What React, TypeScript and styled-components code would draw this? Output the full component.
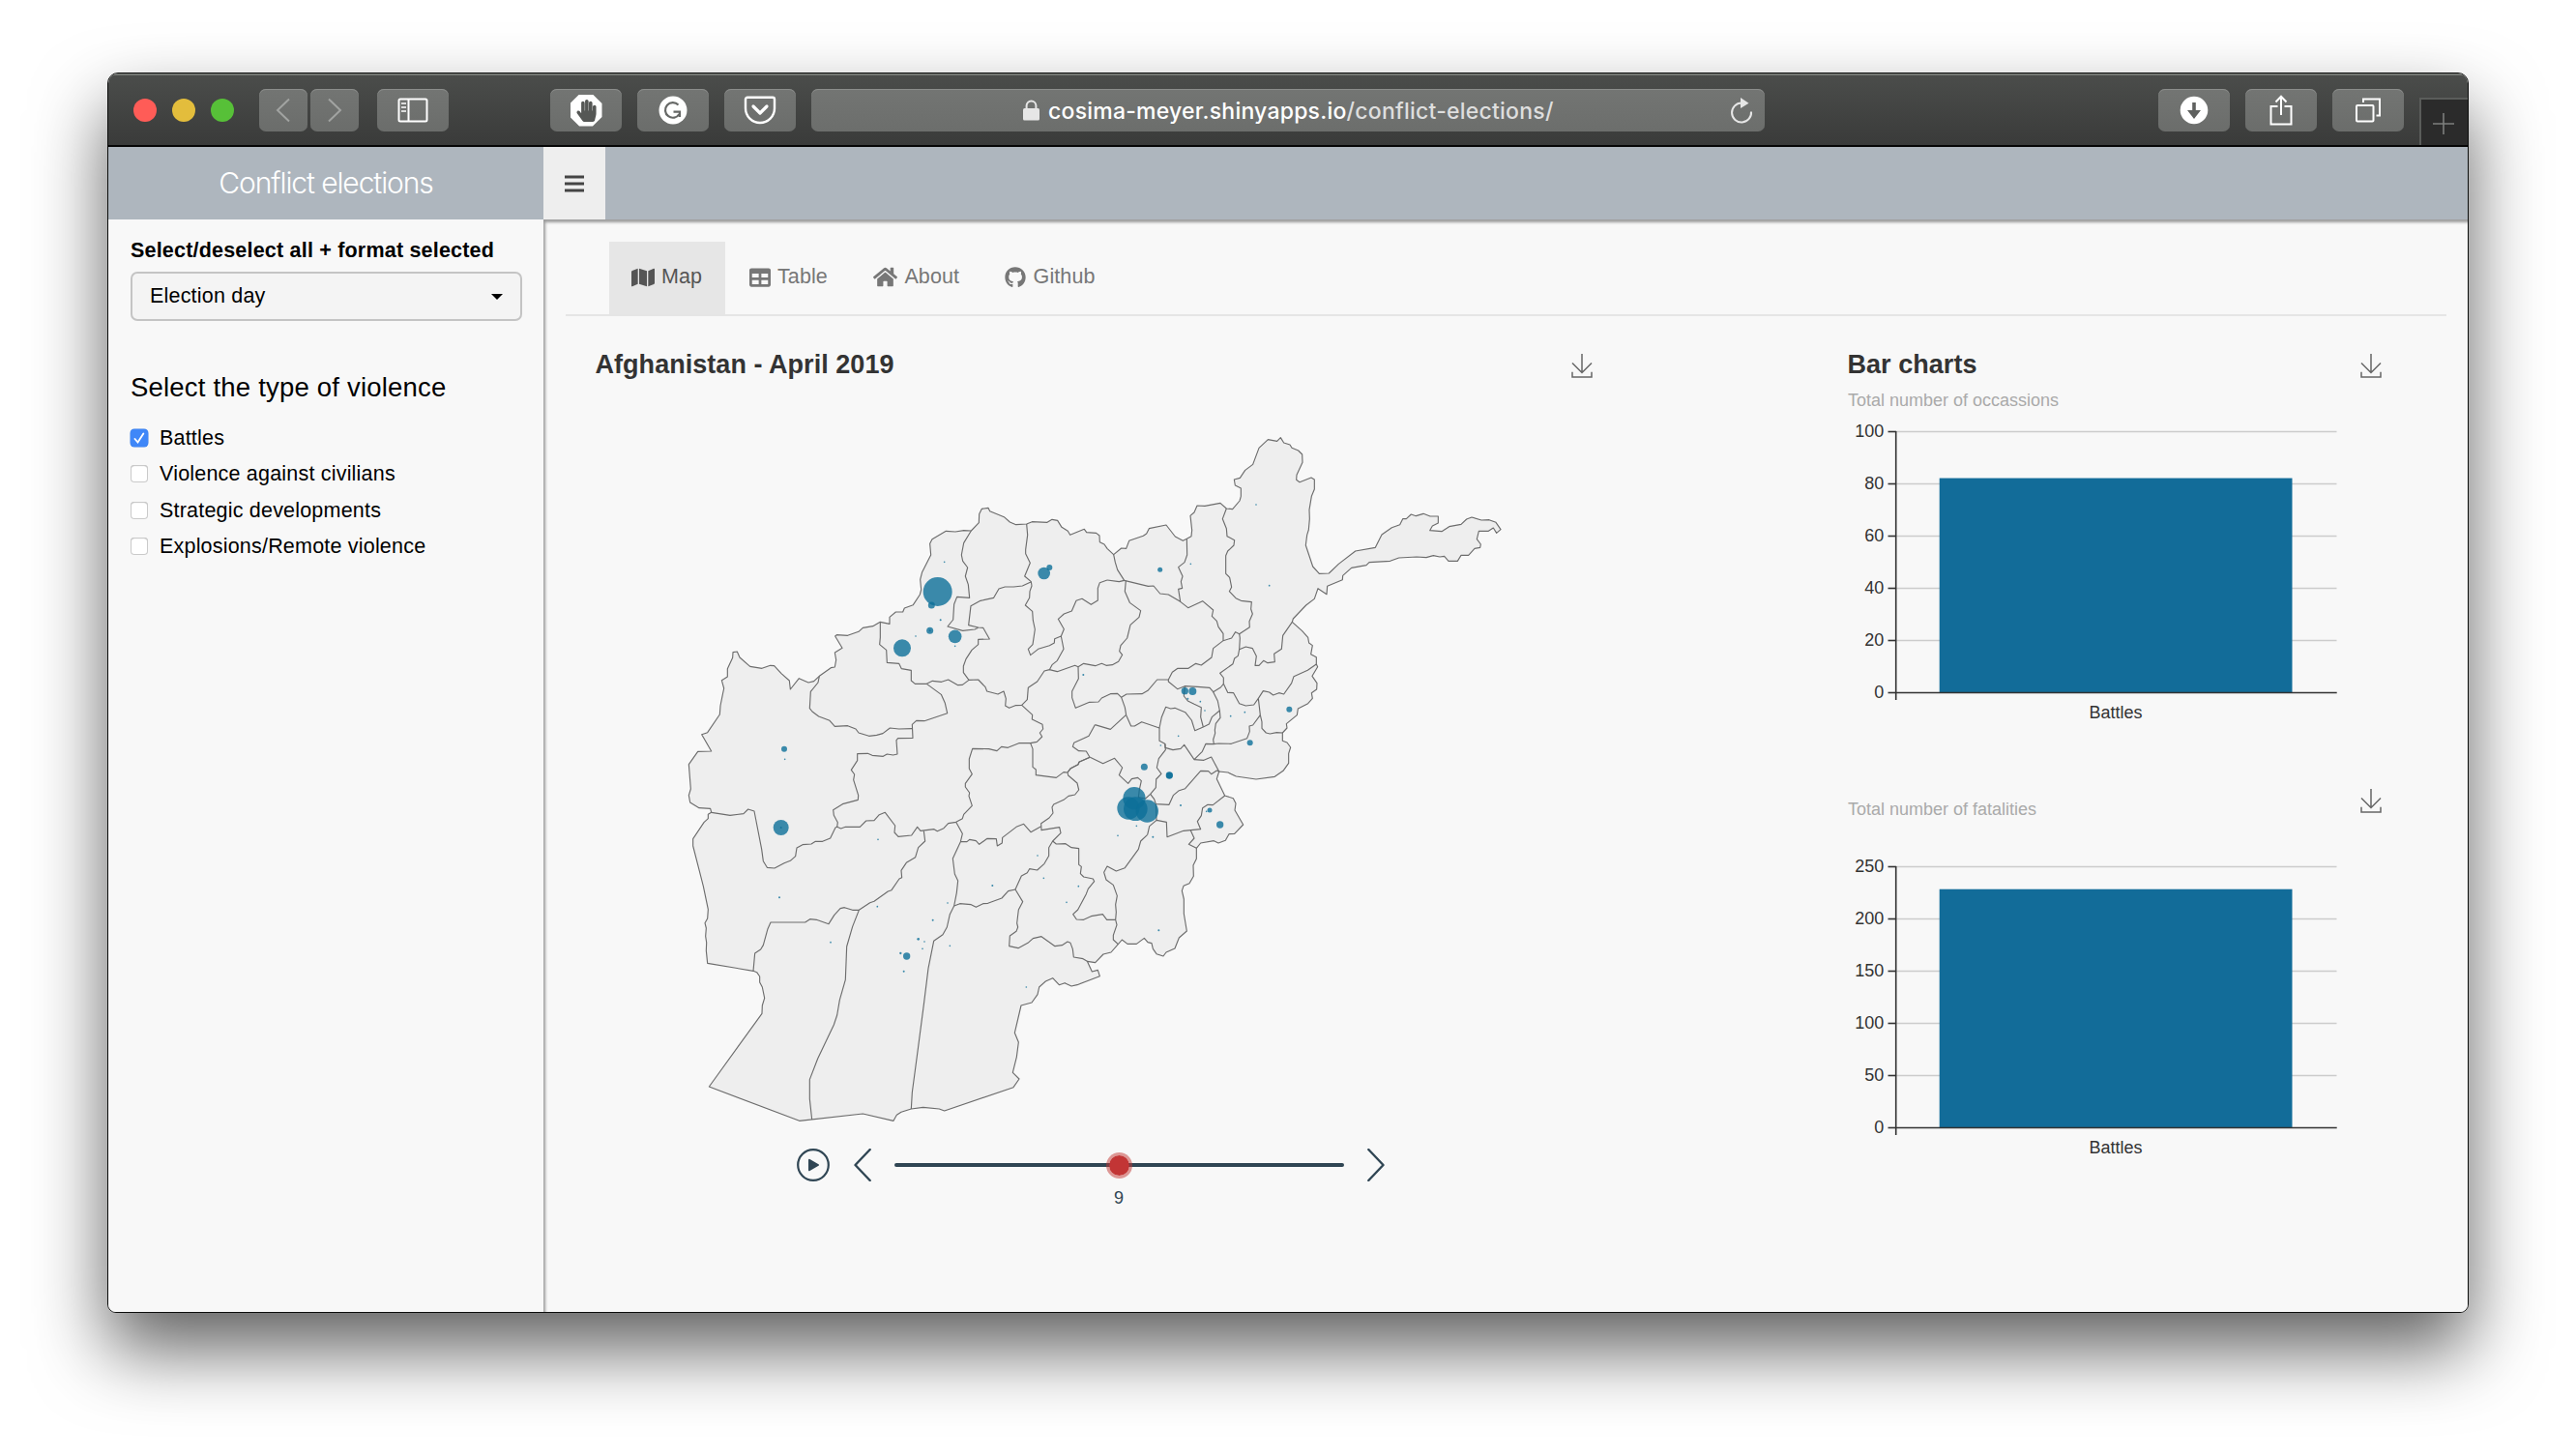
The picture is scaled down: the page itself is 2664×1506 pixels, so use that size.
import React from "react";
import styled, { createGlobalStyle } from "styled-components";
import { FaGithub, FaHandPaper, FaHome, FaMap, FaTable } from "react-icons/fa";

const GlobalStyle = createGlobalStyle`
  *, *::before, *::after { box-sizing: border-box; }
  body {
    margin: 0;
    background: #fff;
    font-family: "Liberation Sans", Arial, Helvetica, sans-serif;
  }
`;

/* ---------- window ---------- */

const Desktop = styled.div`
  width: 2664px;
  height: 1506px;
  padding: 75px 111px 0;
  overflow: hidden;
`;

const BrowserWindow = styled.div`
  width: 2442px;
  height: 1283px;
  border: 1px solid #0c0d0c;
  border-radius: 11px 11px 9px 9px;
  background: #f8f8f8;
  overflow: hidden;
  display: flex;
  flex-direction: column;
  box-shadow: 0 38px 76px rgba(0, 0, 0, 0.62);
`;

const Toolbar = styled.div`
  flex: none;
  height: 76px;
  padding: 2px 0 0 26px;
  display: flex;
  align-items: center;
  background: linear-gradient(#4b4d4b, #3a3b3a);
  border-bottom: 2px solid #060606;
  box-shadow: inset 0 2px 0 #737672;
`;

const Lights = styled.div`
  display: flex;
  gap: 16px;
  width: 130px;
`;

const Light = styled.span<{ $color: string }>`
  width: 24px;
  height: 24px;
  border-radius: 50%;
  background: ${(p) => p.$color};
`;

const ToolButton = styled.button<{ $width: number; $before?: number }>`
  flex: none;
  width: ${(p) => p.$width}px;
  height: 44px;
  margin: 0 0 0 ${(p) => p.$before ?? 16}px;
  padding: 0;
  border: 0;
  border-radius: 7px;
  display: flex;
  align-items: center;
  justify-content: center;
  color: #fff;
  background: linear-gradient(#737573, #6b6d6b);
  box-shadow: inset 0 1px 0 #8b8d8b;
`;

const AddressBar = styled.div`
  flex: none;
  width: 986px;
  height: 44px;
  margin-left: 16px;
  padding: 0 12px 0 219px;
  border-radius: 7px;
  display: flex;
  align-items: center;
  color: #e6e6e6;
  background: linear-gradient(#737573, #6c6e6c);
  box-shadow: inset 0 1px 0 #8b8d8b;
`;

const Url = styled.span`
  margin: 2px auto 0 9px;
  font-family: Inter, sans-serif;
  font-size: 23px;
  font-weight: 500;
  line-height: 30px;
  letter-spacing: 0.23px;
  white-space: nowrap;
  color: #dedede;
`;

const Host = styled.span`
  color: #fff;
`;

const NewTab = styled.div`
  align-self: flex-end;
  width: 50px;
  height: 49px;
  margin-left: 16px;
  padding: 3px 3px 0 0;
  display: flex;
  align-items: center;
  justify-content: center;
  background: #2b2b2b;
  border: solid #5a5c5a;
  border-width: 2px 0 0 2px;
`;

/* ---------- dashboard ---------- */

const Page = styled.div`
  flex: 1;
  display: flex;
  min-height: 0;
`;

const Sidebar = styled.aside`
  flex: none;
  width: 450px;
  background: #f8f8f8;
`;

const Brand = styled.div`
  height: 75px;
  background: #aeb6be;
  color: #fff;
  font-family: Inter, sans-serif;
  font-weight: 300;
  font-size: 30px;
  line-height: 75px;
  letter-spacing: -1.1px;
  text-align: center;
`;

const Filters = styled.div`
  padding: 18px 22px 0 23px;
  color: #000;
  font-size: 21.5px;
  letter-spacing: 0.2px;
`;

const FieldLabel = styled.div`
  font-weight: 700;
  line-height: 29px;
  padding-bottom: 1px;
  white-space: nowrap;
`;

const Select = styled.div`
  height: 51px;
  margin-top: 6px;
  padding: 0 18px;
  display: flex;
  align-items: center;
  justify-content: space-between;
  border: 2px solid #c4c4c4;
  border-radius: 7px;
  background: #f4f4f4;
`;

const Caret = styled.span`
  border: 6px solid transparent;
  border-top-color: #000;
  border-bottom: 0;
`;

const GroupTitle = styled.h2`
  margin: 54px 0 18px;
  font-size: 27.5px;
  font-weight: 400;
  line-height: 30px;
  white-space: nowrap;
`;

const CheckRow = styled.div`
  height: 37.5px;
  display: flex;
  align-items: center;
  gap: 12px;
  line-height: 24px;
  white-space: nowrap;
`;

const Box = styled.span<{ $on: boolean }>`
  width: 18px;
  height: 18px;
  border-radius: 4px;
  display: flex;
  align-items: center;
  justify-content: center;
  background: ${(p) => (p.$on ? "#3f87f8" : "#fff")};
  box-shadow: ${(p) => (p.$on ? "0 0 0 0.5px #3b7fe8" : "inset 0 0 0 1px #cacaca, inset 0 1px 1px #b0b0b0")};
`;

const Main = styled.main`
  flex: 1;
  min-width: 0;
  display: flex;
  flex-direction: column;
`;

const Navbar = styled.header`
  flex: none;
  height: 75px;
  background: #aeb6be;
`;

const MenuButton = styled.button`
  width: 64px;
  height: 75px;
  padding: 0;
  border: 0;
  display: flex;
  align-items: center;
  justify-content: center;
  background: #eee;
`;

const Content = styled.div`
  flex: 1;
  padding: 23px 22px 0 23px;
  background: #f8f8f8;
  box-shadow: inset 2px 3px 3px #9d9d9d;
`;

const TabList = styled.nav`
  display: flex;
  gap: 2px;
  height: 77px;
  padding-left: 45px;
  border-bottom: 2px solid #e5e5e5;
`;

const Tab = styled.div<{ $active?: boolean }>`
  height: 75px;
  min-width: 120px;
  padding: 0 22.5px 2px;
  display: flex;
  align-items: center;
  gap: 7.5px;
  font-size: 21.5px;
  letter-spacing: 0.1px;
  white-space: nowrap;
  color: ${(p) => (p.$active ? "#555" : "#777")};
  background: ${(p) => (p.$active ? "#e6e6e6" : "transparent")};
`;

const Panels = styled.div`
  display: grid;
  grid-template-columns: 1295px 552px;
  padding: 35px 0 0 31px;
`;

const PanelHeader = styled.div<{ $width: number }>`
  width: ${(p) => p.$width}px;
  height: 30px;
  display: flex;
  justify-content: space-between;
  align-items: flex-end;
`;

const PanelTitle = styled.h3`
  margin: 0 0 0 -0.5px;
  font-size: 27px;
  font-weight: 700;
  line-height: 30px;
  letter-spacing: 0.04px;
  white-space: nowrap;
  color: #333;
`;

const Subtitle = styled.div`
  font-size: 18px;
  line-height: 24px;
  white-space: nowrap;
  color: #aaa;
`;

const FirstSubtitle = styled(Subtitle)`
  margin-top: 10px;
`;

const SecondHeader = styled.div`
  height: 33px;
  margin: 56px 0 27px;
  display: flex;
  justify-content: space-between;
  ${Subtitle} { padding-top: 9px; }
`;

const MapSvg = styled.svg`
  display: block;
  margin: 38px 0 0 84px;
`;

const Timeline = styled.div`
  display: flex;
  align-items: center;
  height: 34px;
  margin: 8px 0 0 208px;
`;

const PlayButton = styled.svg`
  margin-right: 25px;
`;

const Track = styled.div`
  position: relative;
  width: 465px;
  height: 4px;
  margin: 0 24px;
  border-radius: 2px;
  background: #304654;
`;

const Handle = styled.span`
  position: absolute;
  left: 50%;
  top: 50%;
  width: 27px;
  height: 27px;
  margin: -13.5px 0 0 -13.5px;
  border-radius: 50%;
  border: 3.5px solid rgba(194, 53, 49, 0.5);
  background: #c23535;
  background-clip: padding-box;
`;

const Tick = styled.span`
  position: absolute;
  left: 50%;
  top: 24px;
  width: 30px;
  margin-left: -15.5px;
  text-align: center;
  font-size: 18px;
  line-height: 24px;
  color: #304654;
`;

const ChartSvg = styled.svg`
  display: block;
  overflow: visible;
  font-family: "Liberation Sans", Arial, sans-serif;
  font-size: 18px;
`;

/* ---------- small drawings ---------- */

const Download = () => (
  <svg width="22" height="26" viewBox="0 0 22 26" fill="none" stroke="#666" strokeWidth="1.5">
    <path d="M11 0V19.5M1 9.5L11 19.5L21 9.5M1 18.8V24H21V18.8" />
  </svg>
);

const Chevron = ({ flip }: { flip?: boolean }) => (
  <svg width="18" height="34" viewBox="0 0 18 34" fill="none" stroke="#304654" strokeWidth="2.4" strokeLinecap="round" strokeLinejoin="round">
    <path d={flip ? "M1.3 1L16.5 17L1.3 33" : "M16.7 1L1.5 17L16.7 33"} />
  </svg>
);

const NavArrow = ({ flip }: { flip?: boolean }) => (
  <svg width="16" height="26" viewBox="0 0 16 26" fill="none" stroke="#a1a3a1" strokeWidth="2">
    <path d={flip ? "M2 1.5L14 13L2 24.5" : "M14 1.5L2 13L14 24.5"} />
  </svg>
);

const SidebarIcon = () => (
  <svg width="32" height="26" viewBox="0 0 32 26" fill="none" stroke="#fff" strokeWidth="2">
    <rect x="1.5" y="1.5" width="29" height="23" rx="1.5" />
    <path d="M11.5 1.5V24.5" />
    <path d="M4 6H9M4 10H9M4 14H9" strokeWidth="1.7" />
  </svg>
);

const BlockerBadge = styled.span`
  width: 33px;
  height: 33px;
  display: flex;
  align-items: center;
  justify-content: center;
  background: #fff;
  color: #555755;
  font-size: 23px;
  clip-path: polygon(29% 0, 71% 0, 100% 29%, 100% 71%, 71% 100%, 29% 100%, 0 71%, 0 29%);
`;

const GIcon = () => (
  <svg width="30" height="30" viewBox="0 0 30 30" fill="none">
    <circle cx="15" cy="15" r="14.5" fill="#fff" />
    <path d="M20.5 9.6A7.8 7.8 0 1 0 21.5 19" stroke="#666866" strokeWidth="2.2" />
    <path d="M15.5 16.6H22V22" stroke="#666866" strokeWidth="2.2" />
  </svg>
);

const PocketIcon = () => (
  <svg width="34" height="30" viewBox="0 0 34 30" fill="none" stroke="#fff" strokeLinejoin="round" strokeLinecap="round">
    <path d="M4 1.8H30A2 2 0 0 1 32 3.8V13A15 15 0 0 1 2 13V3.8A2 2 0 0 1 4 1.8Z" strokeWidth="2.4" />
    <path d="M10 11L17 18L24 11" strokeWidth="3.2" />
  </svg>
);

const LockIcon = () => (
  <svg width="17" height="22" viewBox="0 0 17 22" fill="#e6e6e6">
    <rect y="9" width="17" height="12.5" rx="1.5" />
    <path d="M3.6 10V6.3A4.9 4.9 0 0 1 13.4 6.3V10" fill="none" stroke="#e6e6e6" strokeWidth="2" />
  </svg>
);

const ReloadIcon = () => (
  <svg width="24" height="28" viewBox="0 0 24 28" fill="none">
    <path d="M12 6.5A10 10 0 1 0 22 15.5" stroke="#e6e6e6" strokeWidth="2" />
    <path d="M11 1L19.5 6.7L11 12Z" fill="#e6e6e6" />
  </svg>
);

const DownloadsIcon = () => (
  <svg width="30" height="30" viewBox="0 0 30 30">
    <circle cx="15" cy="15" r="14.3" fill="#fff" />
    <path d="M13.2 7H16.8V15H22L15 24L8 15H13.2Z" fill="#5f615f" />
  </svg>
);

const ShareIcon = () => (
  <svg width="24" height="34" viewBox="0 0 24 34" fill="none" stroke="#fff" strokeWidth="2">
    <path d="M8.5 13H1.5V31.5H22.5V13H15.5M12 22V3M6.5 8.5L12 2.8L17.5 8.5" />
  </svg>
);

const TabsIcon = () => (
  <svg width="28" height="28" viewBox="0 0 28 28" fill="none" stroke="#fff" strokeWidth="2">
    <rect x="2" y="9" width="17.5" height="16.5" rx="1" />
    <path d="M9 6V2.5H26V19.5H22.5" />
  </svg>
);

/* ---------- map ---------- */

type Sheet = { dx: number; dy: number; borders: string[]; dots: number[][] };

// Provinces are digitised on four overlapping sheets; dx/dy moves each sheet into place.
const NW: Sheet = {
  dx: 0,
  dy: 210,
  borders: [
    "913,147 890,185 883,222 887,241 902,261 895,288 904,314 908,355 869,352 860,375 857,423 840,444 887,457 924,453 935,448",
    "1098,306 1072,318 1045,321 1018,321 999,327 983,355 942,364 912,380 905,440 935,447 950,448 970,483 935,484 935,500 915,517 897,545 889,567 889,587 906,610",
    "1085,126 1088,160 1082,205 1082,218 1096,247 1079,288 1099,305 1101,318 1095,335 1094,355 1081,378 1103,397 1105,425 1111,453 1104,500 1090,514 1097,533 1121,514 1156,503 1171,495 1172,482 1192,474 1200,514 1180,550 1164,563 1156,578",
    "1192,474 1201,452 1183,421 1201,405 1225,396 1239,364 1257,358 1285,376 1306,363 1306,325 1312,308 1335,300",
    "631,430 631,478 629,500 650,517 652,556 689,559 697,575 727,580 727,612 739,622 775,622 793,613 821,616 842,609 872,626 886,625 906,610 935,609 957,632 962,645 996,654 1014,645 1021,668 1019,690 1031,697 1050,689 1070,688 1087,671 1090,634 1118,615 1140,582 1156,578 1180,584 1235,565 1245,569",
    "442,598 438,618 415,646 412,698 420,708 440,723 474,736 490,754 530,752 555,762 564,774 596,784 620,781 639,776 661,759 689,762 729,761",
    "775,622 820,655 832,682 839,713 768,737 743,736 730,748 732,790 686,791 681,797 684,840 671,843 652,840 640,847 606,844 592,838 560,839 560,860 541,889 551,903 548,920 563,968 562,982 514,995 485,1013 487,1030 499,1052 497,1066",
    "107,1021 165,1030 207,1025 221,1011 240,1017 263,1135 268,1172 280,1192 303,1194 333,1178 352,1171 368,1157 372,1131 390,1121 417,1119 430,1111 452,1111 476,1101 492,1068 497,1066 509,1071 523,1066 568,1066 587,1047 612,1046 628,1028 646,1021 677,1062 675,1083 687,1096 728,1092 746,1066 756,1078 798,1073 808,1079 828,1070 842,1055 866,1051 886,1040 890,1027 916,1000 906,970 908,960 895,942 895,931 916,902 907,885 907,855 917,823 968,824 993,830 1007,817 1027,820 1061,806 1097,806 1117,802 1133,786 1126,774 1136,762 1134,748 1102,732 1103,718 1070,688",
    "1097,806 1104,824 1104,880 1114,888 1114,905 1177,913 1200,896 1212,897 1214,906 1242,930 1247,951 1235,966 1215,970 1200,982 1169,996 1164,1005 1167,1023 1155,1038 1130,1055 1131,1076 1187,1067 1191,1085 1166,1110",
    "1212,897 1222,884 1245,872 1249,864 1281,850 1270,831 1247,830 1228,817 1232,805 1278,784 1297,749",
  ],
  dots: [
    [809, 336, 45], [790, 378, 10.5], [785, 457, 10.5], [785, 457, 3], [818, 424, 3], [830, 244, 2.5],
    [741, 474, 2.5], [699, 511, 27], [863, 475, 20.5], [863, 505, 2.5], [1139, 279, 19], [1156, 261, 9],
    [333, 824, 9], [335, 856, 2.5], [323, 1068, 24], [323, 1068, 3], [624, 1105, 2.5], [1119, 1155, 2.5],
  ],
};

const NE: Sheet = {
  dx: 1200,
  dy: 0,
  borders: [
    "135,510 172,515 188,511 167,478 160,455 155,431",
    "45,779 62,769 98,776 118,769 132,775 151,773 170,763 182,742 173,731 177,713 197,690 207,649 234,625 239,605 205,580 190,545 193,512",
    "97,959 145,973 193,929",
    "45,779 46,816 26,855 26,875 37,907 80,889 108,888 118,876 145,863 167,862 179,874 195,864 243,863 261,853 290,819 325,819 337,796 354,784 387,784 410,769 427,774 459,750 464,722 495,698 521,690 533,671 545,677 577,656 576,638 586,615 581,600 583,578 550,574 534,566 514,545 521,532 515,502 503,490 503,434 509,420 528,402 530,386 507,374 505,350 493,320 505,288",
    "188,511 262,529 279,528 299,552 325,555 362,577 386,596 431,575 464,603 460,622 475,637 480,655 495,676 495,698",
    "382,382 383,432 375,455 356,470 369,498 364,515 368,535 356,538 362,577",
    "545,677 547,690 545,725 541,745 530,753 525,770 485,799 496,813 496,832 487,843 464,857 453,844 415,841 376,839 353,848 325,825 325,819",
    "545,725 565,717 586,722 598,746 594,775 606,775 620,760 633,767 655,764 653,739 676,724 680,682 709,640",
    "496,832 509,859 527,860 545,893 565,900 590,897 604,877 619,854 638,858 650,867 668,860 683,864 707,830 714,809 757,790 784,771",
    "604,877 610,929 615,950 615,970 628,984 640,987 661,983 679,984",
    "610,929 587,960 576,963 577,980 569,1001 520,1018 480,1017 465,1019 441,1018 430,1042 405,1067 374,1021 363,1033 339,1037 315,1030 314,1018 297,1009 297,969",
    "464,857 478,885 484,915 486,937 472,955 469,975 470,985 464,1005 466,1019",
    "376,839 373,870 385,885 405,895 427,905 425,935 433,966",
    "484,915 460,935 451,957 433,966 407,977 397,945 377,920 345,907 332,909 317,904 304,935 297,969 242,950 220,963 209,963 194,929 190,905 179,874",
    "405,1067 435,1069 458,1059 482,1104 475,1101 458,1112 449,1103 425,1102 377,1157 358,1163 340,1178 327,1207 286,1205 281,1190 269,1174",
    "315,1018 316,1037 295,1064 289,1092 303,1111 287,1128 286,1154 269,1174 254,1188 232,1184 235,1160 241,1133 230,1123 211,1127 200,1141 172,1115 182,1092 158,1063 122,1079 82,1060",
    "286,1205 288,1255",
    "500,1179 463,1208 447,1207 431,1217 427,1241 415,1259 425,1283 372,1288 321,1307 319,1261 288,1255 266,1274 260,1300",
    "394,1287 405,1311 388,1330 412,1342",
  ],
  dots: [
    [61, 804, 3], [299, 478, 7.5], [394, 460, 2.5], [597, 276, 2.5], [638, 527, 2.5], [376, 854, 11],
    [400, 855, 12], [385, 878, 3], [424, 887, 2.5], [438, 915, 2.5], [518, 932, 2.5], [562, 920, 2.5],
    [700, 911, 9], [578, 1015, 9], [356, 994, 2.5], [301, 1023, 2.5], [250, 1090, 10.5], [328, 1116, 11],
    [328, 1116, 10], [363, 1209, 3], [219, 1187, 35], [201, 1218, 35], [223, 1220, 37], [259, 1227, 35],
    [453, 1224, 7.5], [443, 1228, 2.5], [485, 1269, 11], [226, 1273, 2.5], [168, 1303, 2.5], [277, 1307, 3],
  ],
};

const SW: Sheet = {
  dx: 0,
  dy: 1230,
  borders: [
    "866,31 886,67 880,92 856,144 862,192 872,213 868,250 860,291 847,317 838,357 825,380 797,400 780,485 767,590 746,750 730,870 727,921",
    "860,291 878,284 913,287 928,295 950,284 965,283 1008,267 1028,245 1050,240 1073,278 1060,303 1055,345 1058,357 1053,370 1033,384 1031,416 1059,422 1089,406 1105,392 1131,386 1173,416 1195,413 1212,402 1221,406 1228,425 1231,450 1260,455 1273,463",
    "880,92 900,92 908,85 928,89 938,100 963,82 991,83 994,105 1009,96 1010,79 1053,46 1076,37 1098,62 1130,44",
    "766,58 770,90 749,110 740,140 712,157 696,181 698,203 690,207 666,242 655,246 612,277 599,281 565,304 545,304 520,296 507,299 488,320 471,347 433,334 413,332 398,342 291,342 282,362 268,413 260,426 242,438 237,493",
    "565,304 545,355 527,417 523,520 505,583 497,630 487,660 437,765 412,830 412,890 419,954",
    "1050,240 1069,198 1087,188 1094,176 1118,180 1140,160 1154,136 1154,110 1166,90 1177,99 1206,98 1224,110",
  ],
  dots: [
    [318, 265, 3], [622, 293, 2.5], [840, 282, 2.5], [979, 228, 3], [1138, 205, 2.5], [794, 335, 3],
    [749, 394, 4], [768, 402, 2.5], [762, 424, 2.5], [847, 415, 2.5], [477, 404, 2.5], [694, 438, 3.5],
    [713, 447, 11], [704, 494, 3], [1084, 543, 2.5],
  ],
};

const SE: Sheet = {
  dx: 1200,
  dy: 1050,
  borders: [
    "24,290 47,293 47,343 55,349 52,371 62,381 91,387 95,395 76,418 70,434 44,483 29,497 40,513 62,514 85,503 121,497 134,514 161,514",
    "260,250 239,270 232,295 190,353 163,363 135,348 125,367 132,390 154,406 166,440 161,467 163,490 161,514 165,530 154,562 154,576 169,590",
    "82,10 47,25 45,32 22,44 12,57",
  ],
  dots: [[46, 410, 2.5], [9, 460, 2.5], [295, 547, 3]],
};

const SHEETS = [NW, NE, SW, SE];

const COAST: [Sheet, string][] = [
  [NW, "50,1103 84,1052 97,1040 97,1027 107,1021 104,1009 69,1007 41,990 37,968 43,948 37,872 65,832 107,831 77,779 95,773 133,717 135,690 142,655 146,636 139,611 157,600 157,575 173,541 174,524 187,522 195,540 227,568 264,574 290,565 302,566 324,590 349,612 352,639 379,605 408,618 425,614 442,598 478,572 490,570 494,548 490,525 513,511 491,474 496,470 530,472 564,460 577,448 608,443 631,430 660,436 660,415 679,399 701,399 706,387 733,377 754,345 758,330 755,298 761,275 788,222 785,187 792,173 835,148 864,150 890,146 913,147 937,122 938,95 946,79 966,76 971,86 1015,104 1033,120 1052,128 1085,126 1102,119 1149,121 1164,112 1181,115 1194,136 1213,148 1220,160 1264,142 1271,152 1301,154 1311,162 1312,182 1326,189 1335,202"],
  [NE, "155,431 179,411 194,412 203,388 247,373 257,366 265,350 318,339 346,375 370,388 382,382 396,374 398,355 393,310 405,300 414,279 438,280 486,271 505,288 524,290 546,264 550,250 550,225 532,216 529,198 547,193 563,169 587,151 606,100 634,74 662,79 673,68 683,84 702,90 708,100 728,108 740,120 741,145 723,184 722,199 732,206 768,192 778,198 778,228 769,250 762,292 763,320 760,354 755,370 751,402 773,468 793,490 823,489 853,460 905,420 967,409 987,369 1018,347 1043,338 1052,320 1063,320 1078,306 1093,311 1116,304 1137,312 1162,312 1162,333 1144,342 1136,356 1173,359 1196,344 1233,337 1250,321 1266,315 1296,324 1320,323 1341,331 1356,353 1343,364 1333,348 1318,358 1288,358 1282,383 1294,399 1292,409 1275,412 1256,433 1233,433 1222,451 1194,451 1181,436 1167,438 1147,434 1125,440 1095,438 1040,441 1013,451 948,455 939,464 893,472 866,496 865,509 818,529 816,554 789,536 778,568 752,588 712,630 709,640 740,668 758,688 761,705 772,713 767,740 784,749 784,771 788,779 771,808 786,830 785,849 769,860 772,877 758,893 727,909 724,929 691,956 693,969 679,984 679,1009 693,1014 704,1029 698,1048 698,1078 681,1102 655,1120 597,1128 535,1119 510,1107 482,1104 475,1127 500,1179 526,1187 534,1203 531,1224 557,1269 530,1297 513,1298 502,1318 480,1326 466,1319 425,1326 412,1342"],
  [SE, "412,293 412,325 402,345 403,379 390,401 372,409 367,424 373,450 373,495 382,549 358,570 345,603 318,615 309,627 288,620 277,604 273,587 261,584 250,571 226,589 198,589 181,576 169,590 147,615 123,621 98,647 73,643 88,675 106,670 112,689 42,716 24,720 3,710"],
  [SW, "1204,530 1186,536 1166,515 1144,525 1124,543 1119,566 1101,591 1068,600 1048,685 1060,714 1054,760 1042,808 1062,828 1044,854 830,927 814,921 764,916 727,921 696,931 682,940 672,958 577,936 380,958 100,852 264,625 265,600 272,577 265,543 257,528 257,510 248,497 237,493 95,469 91,430 92,405 89,385 91,360 87,344 95,330 97,302 82,230 68,175 50,105 50,83"],
];

const coastPoints = COAST.map(([sheet, pts]) =>
  pts
    .split(" ")
    .map((p) => {
      const [x, y] = p.split(",").map(Number);
      return `${x + sheet.dx},${y + sheet.dy}`;
    })
    .join(" ")
).join(" ");

const ConflictMap = () => (
  <MapSvg width="880" height="750" viewBox="0 0 2640 2250">
    <polygon points={coastPoints} fill="#eee" stroke="#6c6c6c" strokeWidth="3.4" strokeLinejoin="round" />
    {SHEETS.map((s, i) => (
      <g key={i} transform={`translate(${s.dx} ${s.dy})`} fill="none" stroke="#6c6c6c" strokeWidth="3.4" strokeLinejoin="round">
        {s.borders.map((b, j) => (
          <polyline key={j} points={b} />
        ))}
      </g>
    ))}
    {SHEETS.map((s, i) => (
      <g key={i} transform={`translate(${s.dx} ${s.dy})`} fill="#0d6f99" fillOpacity="0.8">
        {s.dots.map(([x, y, r], j) => (
          <circle key={j} cx={x} cy={y} r={r} />
        ))}
      </g>
    ))}
  </MapSvg>
);

/* ---------- bar chart ---------- */

const BarChart = ({ ticks, value }: { ticks: number[]; value: number }) => {
  const max = ticks[0];
  const y = (v: number) => 20.5 + 270 * (1 - v / max);
  return (
    <ChartSvg width="552" height="334" viewBox="0 0 552 334">
      {ticks.map((t) => (
        <g key={t}>
          {t > 0 && <path d={`M50 ${y(t)}H505.5`} stroke="#ccc" strokeWidth="1.6" />}
          <path d={`M41.5 ${y(t)}H50`} stroke="#333" strokeWidth="1.6" />
          <text x="37.3" y={y(t) + 5.7} textAnchor="end" fill="#333">{t}</text>
        </g>
      ))}
      <rect x="94.7" y={y(value)} width="364.8" height={y(0) - y(value)} fill="#126c99" />
      <path d={`M49.7 20V298M49.7 ${y(0)}H505.7`} stroke="#333" strokeWidth="1.6" fill="none" />
      <text x="277" y="316.6" textAnchor="middle" fill="#333">Battles</text>
    </ChartSvg>
  );
};

const VIOLENCE = [
  { label: "Battles", on: true },
  { label: "Violence against civilians", on: false },
  { label: "Strategic developments", on: false },
  { label: "Explosions/Remote violence", on: false },
];

export default function App() {
  return (
    <Desktop>
      <GlobalStyle />
      <BrowserWindow>
        <Toolbar>
          <Lights>
            <Light $color="#ff5c57" />
            <Light $color="#e3bd3c" />
            <Light $color="#57c038" />
          </Lights>
          <ToolButton $width={50} $before={0}><NavArrow /></ToolButton>
          <ToolButton $width={50} $before={3}><NavArrow flip /></ToolButton>
          <ToolButton $width={74} $before={19}><SidebarIcon /></ToolButton>
          <ToolButton $width={74} $before={105}><BlockerBadge><FaHandPaper /></BlockerBadge></ToolButton>
          <ToolButton $width={74}><GIcon /></ToolButton>
          <ToolButton $width={74}><PocketIcon /></ToolButton>
          <AddressBar>
            <LockIcon />
            <Url><Host>cosima-meyer.shinyapps.io</Host>/conflict-elections/</Url>
            <ReloadIcon />
          </AddressBar>
          <ToolButton $width={74} $before={407}><DownloadsIcon /></ToolButton>
          <ToolButton $width={74}><ShareIcon /></ToolButton>
          <ToolButton $width={74}><TabsIcon /></ToolButton>
          <NewTab>
            <svg width="24" height="24" viewBox="0 0 24 24" stroke="#7d7f7d" strokeWidth="1.6">
              <path d="M12 1V23M1 12H23" />
            </svg>
          </NewTab>
        </Toolbar>
        <Page>
          <Sidebar>
            <Brand>Conflict elections</Brand>
            <Filters>
              <FieldLabel>Select/deselect all + format selected</FieldLabel>
              <Select>Election day<Caret /></Select>
              <GroupTitle>Select the type of violence</GroupTitle>
              {VIOLENCE.map((v) => (
                <CheckRow key={v.label}>
                  <Box $on={v.on}>
                    {v.on && (
                      <svg width="12" height="12" viewBox="0 0 12 12" fill="none" stroke="#fff" strokeWidth="1.8" strokeLinecap="round">
                        <path d="M1.5 7L4.5 10.5L10.3 1.5" />
                      </svg>
                    )}
                  </Box>
                  {v.label}
                </CheckRow>
              ))}
            </Filters>
          </Sidebar>
          <Main>
            <Navbar>
              <MenuButton>
                <svg width="20" height="18" viewBox="0 0 20 18" stroke="#444" strokeWidth="3">
                  <path d="M0 2H20M0 9H20M0 16H20" />
                </svg>
              </MenuButton>
            </Navbar>
            <Content>
              <TabList>
                <Tab $active><FaMap size={24} />Map</Tab>
                <Tab><FaTable size={22} />Table</Tab>
                <Tab><FaHome size={25} />About</Tab>
                <Tab><FaGithub size={22} />Github</Tab>
              </TabList>
              <Panels>
                <section>
                  <PanelHeader $width={1031}>
                    <PanelTitle>Afghanistan - April 2019</PanelTitle>
                    <Download />
                  </PanelHeader>
                  <ConflictMap />
                  <Timeline>
                    <PlayButton width="34" height="34" viewBox="0 0 34 34" fill="none">
                      <circle cx="17" cy="17" r="15.8" stroke="#304654" strokeWidth="2.2" />
                      <path d="M13 11.8L22 17L13 22.2Z" fill="#304654" stroke="#304654" strokeWidth="2" strokeLinejoin="round" />
                    </PlayButton>
                    <Chevron />
                    <Track>
                      <Handle />
                      <Tick>9</Tick>
                    </Track>
                    <Chevron flip />
                  </Timeline>
                </section>
                <section>
                  <PanelHeader $width={552}>
                    <PanelTitle>Bar charts</PanelTitle>
                    <Download />
                  </PanelHeader>
                  <FirstSubtitle>Total number of occassions</FirstSubtitle>
                  <BarChart ticks={[100, 80, 60, 40, 20, 0]} value={82.2} />
                  <SecondHeader>
                    <Subtitle>Total number of fatalities</Subtitle>
                    <Download />
                  </SecondHeader>
                  <BarChart ticks={[250, 200, 150, 100, 50, 0]} value={228.5} />
                </section>
              </Panels>
            </Content>
          </Main>
        </Page>
      </BrowserWindow>
    </Desktop>
  );
}
